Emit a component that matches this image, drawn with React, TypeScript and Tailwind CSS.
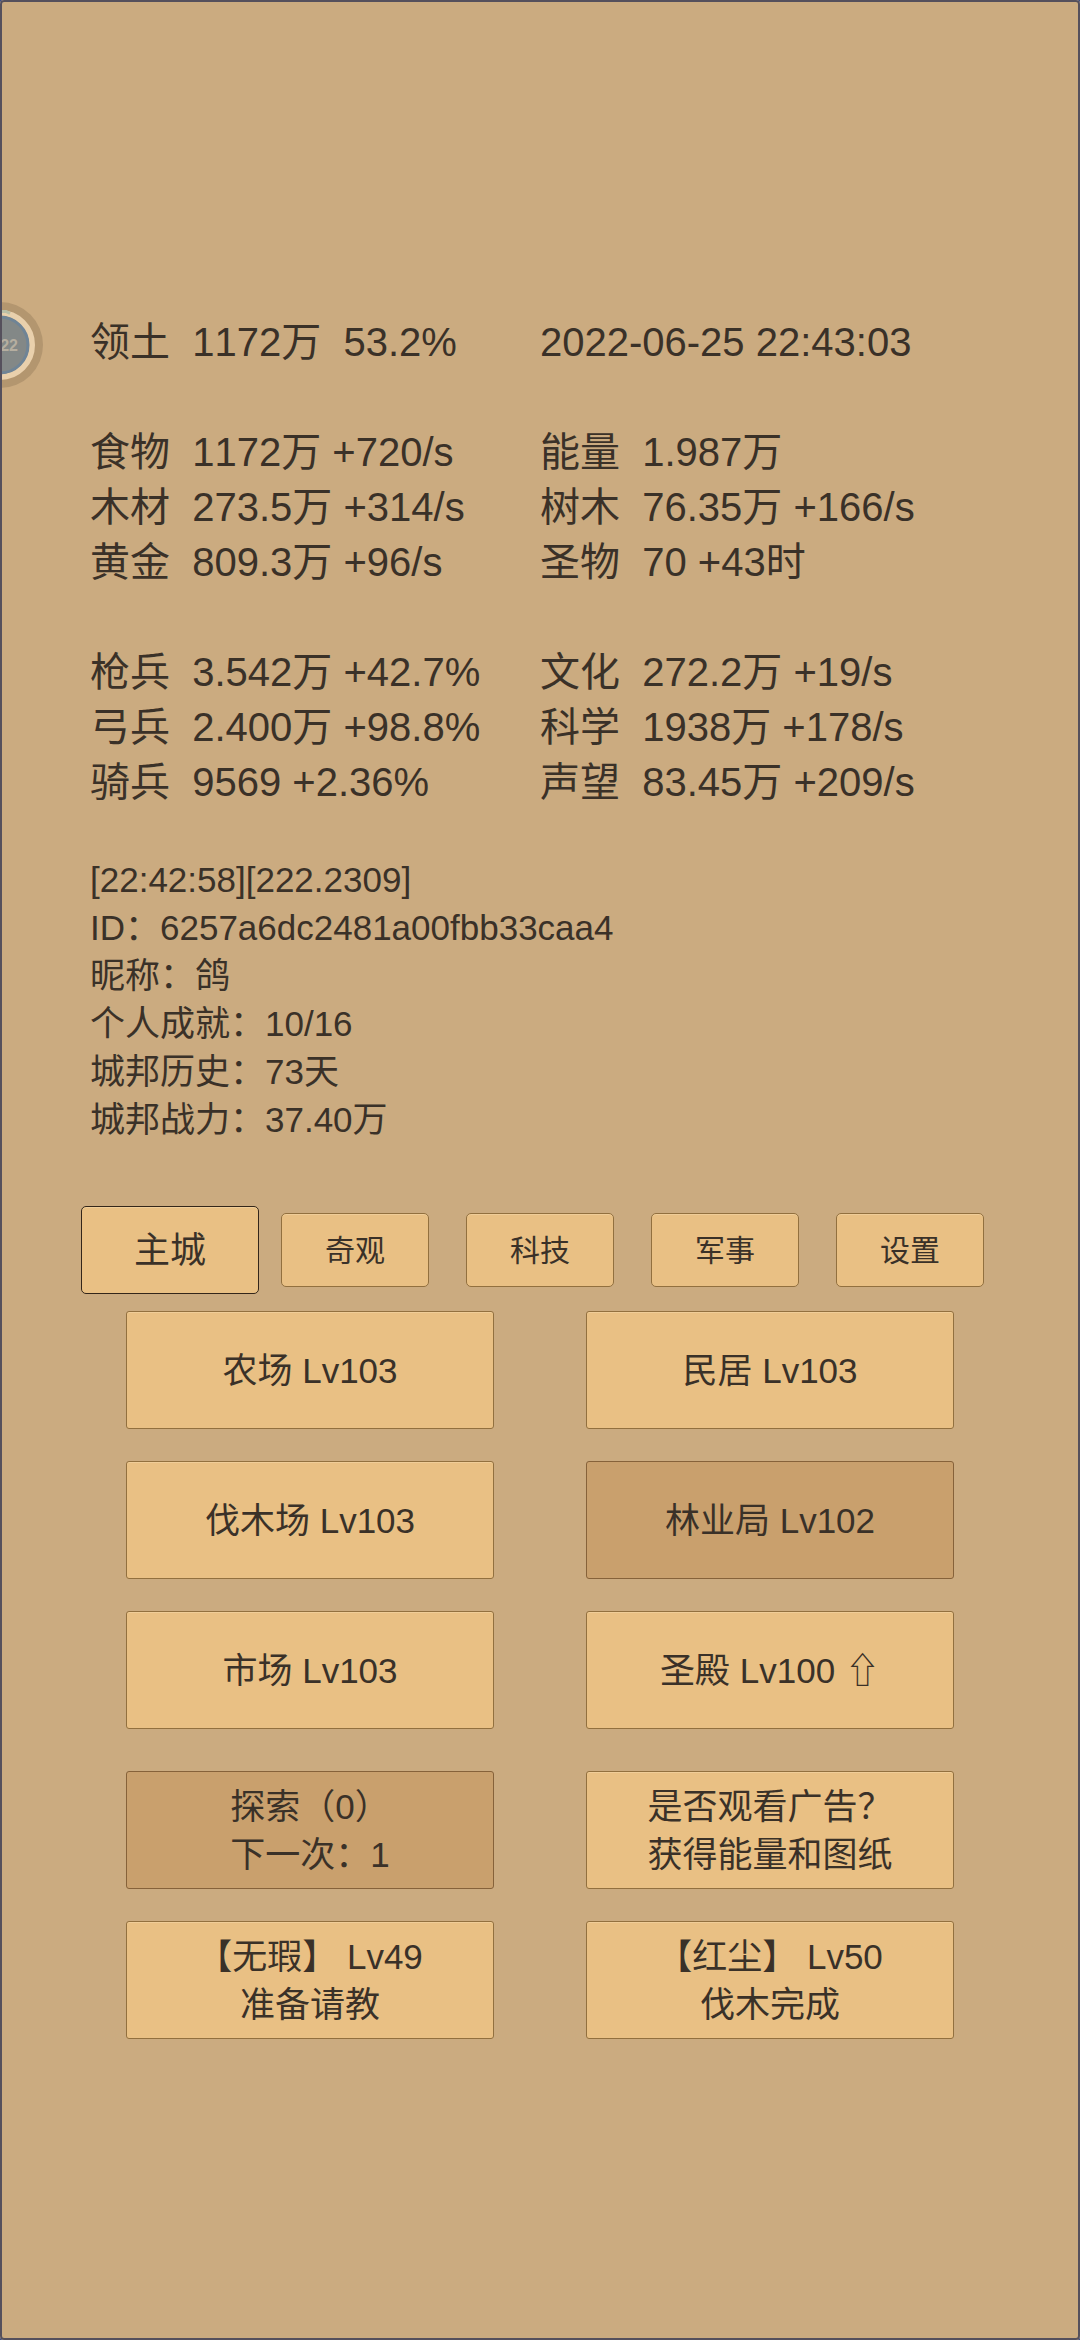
import { useState } from "react";
import clsx from "clsx";

interface Stat {
  label: string;
  value: string;
}

interface Building {
  id: string;
  lines: string[];
  dimmed?: boolean;
}

const resources: [Stat, Stat][] = [
  [{ label: "食物", value: "1172万 +720/s" }, { label: "能量", value: "1.987万" }],
  [{ label: "木材", value: "273.5万 +314/s" }, { label: "树木", value: "76.35万 +166/s" }],
  [{ label: "黄金", value: "809.3万 +96/s" }, { label: "圣物", value: "70 +43时" }],
];

const army: [Stat, Stat][] = [
  [{ label: "枪兵", value: "3.542万 +42.7%" }, { label: "文化", value: "272.2万 +19/s" }],
  [{ label: "弓兵", value: "2.400万 +98.8%" }, { label: "科学", value: "1938万 +178/s" }],
  [{ label: "骑兵", value: "9569 +2.36%" }, { label: "声望", value: "83.45万 +209/s" }],
];

const log = [
  "[22:42:58][222.2309]",
  "ID：6257a6dc2481a00fbb33caa4",
  "昵称：鸽",
  "个人成就：10/16",
  "城邦历史：73天",
  "城邦战力：37.40万",
];

const tabs = ["主城", "奇观", "科技", "军事", "设置"];

const buildings: Building[] = [
  { id: "farm", lines: ["农场 Lv103"] },
  { id: "house", lines: ["民居 Lv103"] },
  { id: "lumber", lines: ["伐木场 Lv103"] },
  { id: "forestry", lines: ["林业局 Lv102"], dimmed: true },
  { id: "market", lines: ["市场 Lv103"] },
  { id: "temple", lines: ["圣殿 Lv100 ⇧"] },
];

const actions: Building[] = [
  { id: "explore", lines: ["探索（0）", "下一次：1"], dimmed: true },
  { id: "ad", lines: ["是否观看广告？", "获得能量和图纸"] },
  { id: "wuxia", lines: ["【无瑕】 Lv49", "准备请教"] },
  { id: "hongchen", lines: ["【红尘】 Lv50", "伐木完成"] },
];

function StatLine({ label, value }: Stat) {
  return (
    <p className="whitespace-pre">
      {label}
      {"  "}
      {value}
    </p>
  );
}

function StatGroup({ rows }: { rows: [Stat, Stat][] }) {
  return (
    <div className="grid grid-cols-2">
      {rows.flat().map((stat) => (
        <StatLine key={stat.label} {...stat} />
      ))}
    </div>
  );
}

function BuildingGrid({ items }: { items: Building[] }) {
  return (
    <div className="grid grid-cols-2 gap-x-[92px] gap-y-8">
      {items.map(({ id, lines, dimmed }) => (
        <button
          key={id}
          className={clsx(
            "h-[118px] rounded-[3px] border pt-0.5 text-[35px] leading-[48px] whitespace-pre",
            dimmed
              ? "border-[#86623a] bg-[#c9a06d]"
              : "border-[#92703f] bg-[#e9c084] shadow-[inset_0_1px_0_#f0cd98]"
          )}
        >
          {lines.map((line) => (
            <span key={line} className="block">
              {line}
            </span>
          ))}
        </button>
      ))}
    </div>
  );
}

// Screen recorder bubble docked half way off the left edge
function RecorderBubble() {
  return (
    <svg className="absolute left-0 top-[302px]" width="44" height="88" viewBox="0 0 44 88" aria-hidden="true">
      <circle cx="0" cy="43" r="43" fill="#b3966f" />
      <circle cx="0" cy="43" r="32" fill="#838887" stroke="#e9d0ac" strokeWidth="6" />
      <circle cx="0" cy="43" r="28" fill="none" stroke="#6f8496" strokeWidth="3" />
      <path d="M0 9.500h6l4 2" fill="none" stroke="#b9bfa8" strokeWidth="3" />
      <text x="18" y="49" textAnchor="end" fontSize="16" className="font-bold" fill="#b5aea0">
        22
      </text>
    </svg>
  );
}

export default function App() {
  const [activeTab, setActiveTab] = useState("主城");

  return (
    <div className="bg-[#3d4f86]">
      <main className="relative min-h-screen overflow-hidden rounded-[4px] bg-[#cbab80] pt-[315px] pb-[300px] font-['Liberation_Sans','Noto_Sans_CJK_SC',sans-serif] text-[#3a3128] [font-kerning:none]">
        <RecorderBubble />

        <section className="flex flex-col gap-[55px] px-[90px] text-[40px] leading-[55px]">
          <div className="grid grid-cols-2">
            <StatLine label="领土" value="1172万  53.2%" />
            <time dateTime="2022-06-25T22:43:03">2022-06-25 22:43:03</time>
          </div>
          <StatGroup rows={resources} />
          <StatGroup rows={army} />
        </section>

        <section className="mt-[46px] px-[90px] text-[35px] leading-[48px]">
          {log.map((line) => (
            <p key={line}>{line}</p>
          ))}
        </section>

        <nav className="mt-[62px] grid h-[88px] grid-cols-5 items-center gap-x-[37px] px-24">
          {tabs.map((tab) => (
            <button
              key={tab}
              onClick={() => setActiveTab(tab)}
              className={clsx(
                "rounded-[5px] border bg-[#e9c084] shadow-[inset_0_1px_0_#f0cd98]",
                tab === activeTab
                  ? "-mx-[15px] h-[88px] border-[#33261a] pt-0.5 text-[36px]"
                  : "h-[74px] border-[#92703f] text-[30px]"
              )}
            >
              {tab}
            </button>
          ))}
        </nav>

        <section className="mt-[17px] flex flex-col gap-[42px] px-[126px]">
          <BuildingGrid items={buildings} />
          <BuildingGrid items={actions} />
        </section>

        <div className="pointer-events-none absolute inset-0 rounded-[4px] border-2 border-[#55505c]" />
      </main>
    </div>
  );
}
